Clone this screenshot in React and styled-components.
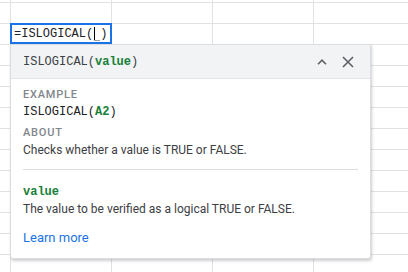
import React from "react";
import styled, { createGlobalStyle } from "styled-components";

const GlobalStyle = createGlobalStyle`
  html, body {
    margin: 0;
    padding: 0;
    background: #fff;
    overflow: hidden;
  }
  body {
    font-family: Roboto, "Liberation Sans", Arial, sans-serif;
  }
`;

const MONO = `"Liberation Mono", "DejaVu Sans Mono", monospace`;

const Page = styled.div`
  position: relative;
  width: 408px;
  height: 272px;
  overflow: hidden;
`;

// spreadsheet background grid
const Sheet = styled.div`
  display: grid;
  grid-template-columns: repeat(5, 101px);
  grid-auto-rows: 21px;
  margin: -18px 0 0 -90px;
`;

const Cell = styled.div`
  box-sizing: border-box;
  border-right: 1px solid #e2e2e2;
  border-bottom: 1px solid #e2e2e2;
`;

const Editor = styled.div`
  position: absolute;
  left: 10px;
  top: 23px;
  width: 102px;
  height: 21px;
  box-sizing: border-box;
  border: 2px solid #1a73e8;
  background: #fff;
  display: flex;
  align-items: center;
  padding-left: 2px;
  font-family: ${MONO};
  font-size: 12px;
  color: #202124;
  white-space: pre;
`;

const Caret = styled.span`
  display: inline-block;
  width: 7px;
  height: 14px;
  position: relative;
  &::before {
    content: "";
    position: absolute;
    left: 1px;
    top: 0;
    width: 1px;
    height: 14px;
    background: #000;
  }
  &::after {
    content: "";
    position: absolute;
    left: 1px;
    right: 0;
    bottom: 0;
    height: 1px;
    background: #9aa0a6;
  }
`;

const Popup = styled.div`
  position: absolute;
  left: 10px;
  top: 44px;
  width: 361px;
  box-sizing: border-box;
  background: #fff;
  border: 1px solid #dadce0;
  border-radius: 0 0 3px 3px;
  box-shadow: 1px 2px 3px rgba(60, 64, 67, 0.25);
`;

const Header = styled.div`
  height: 33px;
  background: #f1f3f4;
  border-bottom: 1px solid #e4e6e8;
  display: flex;
  align-items: center;
  padding: 0 12px 0 12px;
`;

const Signature = styled.div`
  flex: 1;
  font-family: ${MONO};
  font-size: 12px;
  color: #3c4043;
`;

const Arg = styled.span`
  color: #188038;
  font-weight: bold;
`;

const IconButton = styled.span`
  display: flex;
  align-items: center;
  justify-content: center;
  width: 20px;
  height: 20px;
  margin-left: ${(p) => p.gap || 0}px;
`;

const Body = styled.div`
  padding: 8px 12px 11px 12px;
`;

const Label = styled.div`
  font-size: 11px;
  line-height: 16px;
  font-weight: 500;
  letter-spacing: 0.8px;
  color: #80868b;
  margin-top: ${(p) => p.top || 0}px;
`;

const Code = styled.div`
  font-family: ${MONO};
  font-size: 12px;
  line-height: 18px;
  color: #202124;
`;

const Text = styled.div`
  font-size: 12px;
  line-height: 18px;
  color: #3c4043;
`;

const Divider = styled.hr`
  border: none;
  border-top: 1px solid #dadce0;
  margin: 10px 0 14px 0;
`;

const ArgName = styled.div`
  font-family: ${MONO};
  font-size: 12px;
  font-weight: bold;
  line-height: 16px;
  color: #188038;
`;

const Link = styled.a`
  display: block;
  margin-top: 11px;
  font-size: 13px;
  line-height: 18px;
  color: #1a73e8;
  text-decoration: none;
`;

export default function App() {
  const cells = Array.from({ length: 5 * 15 });
  return (
    <Page>
      <GlobalStyle />
      <Sheet>
        {cells.map((_, i) => (
          <Cell key={i} />
        ))}
      </Sheet>
      <Editor>
        =ISLOGICAL(<Caret />)
      </Editor>
      <Popup>
        <Header>
          <Signature>
            ISLOGICAL(<Arg>value</Arg>)
          </Signature>
          <IconButton>
            <svg width="10" height="6" viewBox="0 0 10 6">
              <polyline points="1,5.2 5,1.2 9,5.2" fill="none" stroke="#5f6368" strokeWidth="1.6" />
            </svg>
          </IconButton>
          <IconButton gap={6}>
            <svg width="12" height="12" viewBox="0 0 12 12">
              <path d="M1 1L11 11M11 1L1 11" stroke="#5f6368" strokeWidth="1.6" />
            </svg>
          </IconButton>
        </Header>
        <Body>
          <Label>EXAMPLE</Label>
          <Code>
            ISLOGICAL(<Arg>A2</Arg>)
          </Code>
          <Label top={4}>ABOUT</Label>
          <Text>Checks whether a value is TRUE or FALSE.</Text>
          <Divider />
          <ArgName>value</ArgName>
          <Text>The value to be verified as a logical TRUE or FALSE.</Text>
          <Link href="#">Learn more</Link>
        </Body>
      </Popup>
    </Page>
  );
}
